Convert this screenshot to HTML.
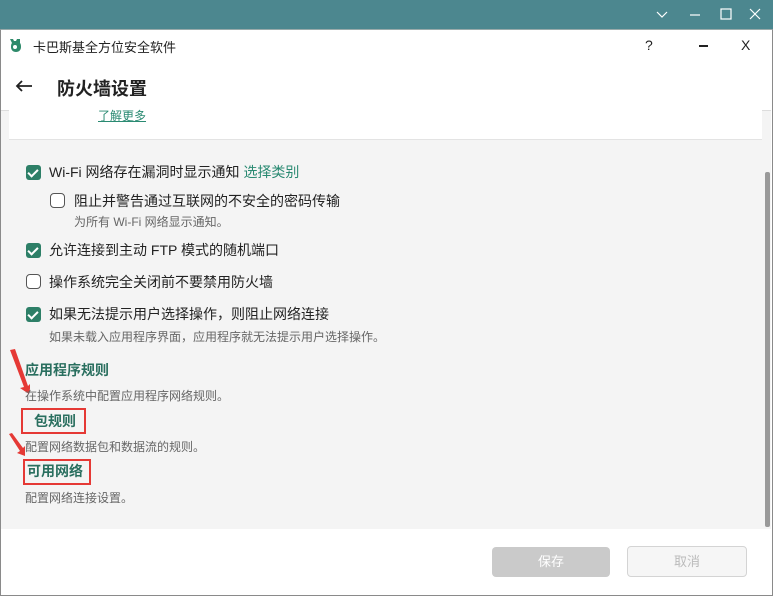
<!DOCTYPE html>
<html><head><meta charset="utf-8"><style>
*{margin:0;padding:0;box-sizing:border-box}
body{width:773px;height:596px;overflow:hidden;background:#fff;font-family:"Liberation Sans","Noto Sans CJK SC",sans-serif;position:relative;color:#222}
.a{position:absolute}
.top{left:0;top:0;width:773px;height:29px;background:#4c878f}
.win{left:0;top:29px;width:773px;height:567px;background:#fff;border:1px solid #8a8a8a;border-top:1px solid #9aa}
.content{left:1px;top:110px;width:770px;height:419px;background:#f4f4f4;border-top:1px solid #ddd}
.card{left:9px;top:110px;width:753px;height:30px;background:#fff;border-bottom:1px solid #e3e3e3}
.cb{width:15px;height:15px;border-radius:3px;background:#2d7f67}
.cb:after{content:"";position:absolute;left:4px;top:2px;width:4px;height:8px;border:solid #fff;border-width:0 2px 2px 0;transform:rotate(45deg)}
.ucb{width:15px;height:15px;border-radius:4px;border:1.5px solid #555;background:#fff}
.t{font-size:14px;white-space:nowrap}
.s{font-size:12px;color:#666;white-space:nowrap}
.g{color:#2a8a72}
.h{font-size:14px;font-weight:bold;color:#2a6f5f;white-space:nowrap}
.red{border:2px solid #e53935}
.btn{font-size:13px;text-align:center;line-height:30px;border-radius:4px}
</style></head><body>
<div class="a top"></div>
<svg class="a" style="left:650px;top:7px" width="120" height="16" stroke="#fff" fill="none" stroke-width="1.2"><path d="M7 5l5 5 5-5"/><path d="M40 8h10"/><rect x="71" y="2" width="10" height="10"/><path d="M100 2l10 10M110 2l-10 10"/></svg>
<div class="a win"></div>
<svg class="a" style="left:8px;top:38px" width="14" height="15"><path d="M2 1h3l1 2h2l1-2h3v4c1 1 1 3 1 4 0 3-2 5-5 5s-5-2-5-5c0-1 0-3 1-4z" fill="#2e8a6a"/><circle cx="7" cy="9" r="2" fill="#fff"/></svg>
<div class="a t" style="left:33px;top:37px;font-size:13px">卡巴斯基全方位安全软件</div>
<div class="a t" style="left:645px;top:37px">?</div>
<div class="a" style="left:699px;top:45px;width:9px;height:2px;background:#222"></div>
<div class="a t" style="left:741px;top:37px">X</div>
<svg class="a" style="left:15px;top:79px" width="18" height="14" stroke="#222" stroke-width="1.8" fill="none"><path d="M17 7H2M7 2L2 7l5 5"/></svg>
<div class="a" style="left:57px;top:75px;font-size:18px;font-weight:bold;color:#222">防火墙设置</div>
<div class="a content"></div>
<div class="a card"></div>
<div class="a" style="left:98px;top:107px;font-size:12px;color:#2a8a72;text-decoration:underline">了解更多</div>
<div class="a" style="left:765px;top:172px;width:5px;height:355px;background:#999;border-radius:2px"></div>

<div class="a cb" style="left:26px;top:165px"></div>
<div class="a t" style="left:49px;top:162px">Wi-Fi 网络存在漏洞时显示通知 <span class="g">选择类别</span></div>
<div class="a ucb" style="left:50px;top:193px"></div>
<div class="a t" style="left:74px;top:191px">阻止并警告通过互联网的不安全的密码传输</div>
<div class="a s" style="left:74px;top:213px">为所有 Wi-Fi 网络显示通知。</div>
<div class="a cb" style="left:26px;top:243px"></div>
<div class="a t" style="left:49px;top:240px">允许连接到主动 FTP 模式的随机端口</div>
<div class="a ucb" style="left:26px;top:274px"></div>
<div class="a t" style="left:49px;top:272px">操作系统完全关闭前不要禁用防火墙</div>
<div class="a cb" style="left:26px;top:307px"></div>
<div class="a t" style="left:49px;top:304px">如果无法提示用户选择操作，则阻止网络连接</div>
<div class="a s" style="left:49px;top:328px">如果未载入应用程序界面，应用程序就无法提示用户选择操作。</div>

<svg class="a" style="left:6px;top:348px" width="24" height="110"><path d="M4 2L9 1 22 38 25 35 23 46 14 40 18 39z" fill="#e53935"/><path d="M3 86L6 85 17 100 19 98 19 108 11 105 14 103z" fill="#e53935"/></svg>
<div class="a h" style="left:25px;top:360px">应用程序规则</div>
<div class="a s" style="left:25px;top:387px">在操作系统中配置应用程序网络规则。</div>
<div class="a red" style="left:21px;top:408px;width:65px;height:26px"></div>
<div class="a h" style="left:34px;top:411px">包规则</div>
<div class="a s" style="left:25px;top:438px">配置网络数据包和数据流的规则。</div>
<div class="a red" style="left:23px;top:459px;width:68px;height:26px"></div>
<div class="a h" style="left:27px;top:461px">可用网络</div>
<div class="a s" style="left:25px;top:489px">配置网络连接设置。</div>

<div class="a btn" style="left:492px;top:547px;width:118px;height:30px;background:#cacaca;color:#fff">保存</div>
<div class="a btn" style="left:627px;top:546px;width:120px;height:31px;background:#f6f6f6;border:1px solid #d4d4d4;color:#bbb">取消</div>
</body></html>
